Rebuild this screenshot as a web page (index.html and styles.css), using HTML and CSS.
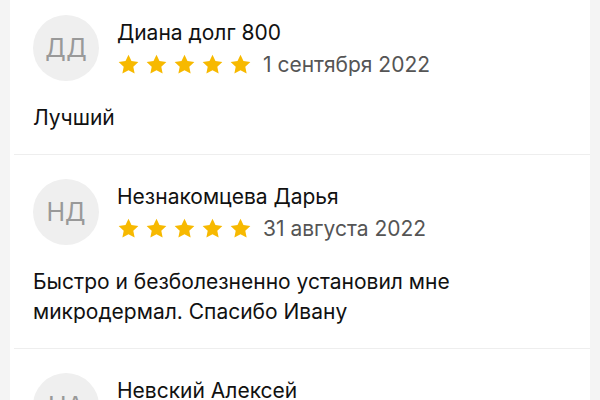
FILE: index.html
```html
<!DOCTYPE html>
<html lang="ru">
<head>
    <meta charset="UTF-8">
    <title>Отзывы</title>
    <link rel="stylesheet" href="styles.css">
</head>
<body>
    <div class="page">
        <div class="reviews">
            <div class="review">
                <div class="head">
                    <div class="avatar">ДД</div>
                    <div class="info">
                        <div class="name">Диана долг 800</div>
                        <div class="meta">
                            <span class="stars">
                                <svg viewBox="0 0 24 24"><path d="M12 1.8l3.1 6.6 7.2.9-5.3 5 1.4 7.1L12 17.9l-6.4 3.5L7 14.3l-5.3-5 7.2-.9z"/></svg>
                                <svg viewBox="0 0 24 24"><path d="M12 1.8l3.1 6.6 7.2.9-5.3 5 1.4 7.1L12 17.9l-6.4 3.5L7 14.3l-5.3-5 7.2-.9z"/></svg>
                                <svg viewBox="0 0 24 24"><path d="M12 1.8l3.1 6.6 7.2.9-5.3 5 1.4 7.1L12 17.9l-6.4 3.5L7 14.3l-5.3-5 7.2-.9z"/></svg>
                                <svg viewBox="0 0 24 24"><path d="M12 1.8l3.1 6.6 7.2.9-5.3 5 1.4 7.1L12 17.9l-6.4 3.5L7 14.3l-5.3-5 7.2-.9z"/></svg>
                                <svg viewBox="0 0 24 24"><path d="M12 1.8l3.1 6.6 7.2.9-5.3 5 1.4 7.1L12 17.9l-6.4 3.5L7 14.3l-5.3-5 7.2-.9z"/></svg>
                            </span>
                            <span class="date">1 сентября 2022</span>
                        </div>
                    </div>
                </div>
                <p class="text">Лучший</p>
            </div>

            <div class="review">
                <div class="head">
                    <div class="avatar">НД</div>
                    <div class="info">
                        <div class="name">Незнакомцева Дарья</div>
                        <div class="meta">
                            <span class="stars">
                                <svg viewBox="0 0 24 24"><path d="M12 1.8l3.1 6.6 7.2.9-5.3 5 1.4 7.1L12 17.9l-6.4 3.5L7 14.3l-5.3-5 7.2-.9z"/></svg>
                                <svg viewBox="0 0 24 24"><path d="M12 1.8l3.1 6.6 7.2.9-5.3 5 1.4 7.1L12 17.9l-6.4 3.5L7 14.3l-5.3-5 7.2-.9z"/></svg>
                                <svg viewBox="0 0 24 24"><path d="M12 1.8l3.1 6.6 7.2.9-5.3 5 1.4 7.1L12 17.9l-6.4 3.5L7 14.3l-5.3-5 7.2-.9z"/></svg>
                                <svg viewBox="0 0 24 24"><path d="M12 1.8l3.1 6.6 7.2.9-5.3 5 1.4 7.1L12 17.9l-6.4 3.5L7 14.3l-5.3-5 7.2-.9z"/></svg>
                                <svg viewBox="0 0 24 24"><path d="M12 1.8l3.1 6.6 7.2.9-5.3 5 1.4 7.1L12 17.9l-6.4 3.5L7 14.3l-5.3-5 7.2-.9z"/></svg>
                            </span>
                            <span class="date">31 августа 2022</span>
                        </div>
                    </div>
                </div>
                <p class="text">Быстро и безболезненно установил мне<br>микродермал. Спасибо Ивану</p>
            </div>

            <div class="review">
                <div class="head">
                    <div class="avatar">НА</div>
                    <div class="info">
                        <div class="name">Невский Алексей</div>
                        <div class="meta">
                            <span class="stars">
                                <svg viewBox="0 0 24 24"><path d="M12 1.8l3.1 6.6 7.2.9-5.3 5 1.4 7.1L12 17.9l-6.4 3.5L7 14.3l-5.3-5 7.2-.9z"/></svg>
                                <svg viewBox="0 0 24 24"><path d="M12 1.8l3.1 6.6 7.2.9-5.3 5 1.4 7.1L12 17.9l-6.4 3.5L7 14.3l-5.3-5 7.2-.9z"/></svg>
                                <svg viewBox="0 0 24 24"><path d="M12 1.8l3.1 6.6 7.2.9-5.3 5 1.4 7.1L12 17.9l-6.4 3.5L7 14.3l-5.3-5 7.2-.9z"/></svg>
                                <svg viewBox="0 0 24 24"><path d="M12 1.8l3.1 6.6 7.2.9-5.3 5 1.4 7.1L12 17.9l-6.4 3.5L7 14.3l-5.3-5 7.2-.9z"/></svg>
                                <svg viewBox="0 0 24 24"><path d="M12 1.8l3.1 6.6 7.2.9-5.3 5 1.4 7.1L12 17.9l-6.4 3.5L7 14.3l-5.3-5 7.2-.9z"/></svg>
                            </span>
                            <span class="date">30 августа 2022</span>
                        </div>
                    </div>
                </div>
            </div>
        </div>
    </div>
</body>
</html>
```

FILE: styles.css
```css
* {
    margin: 0;
    padding: 0;
}
html, body {
    height: 100%;
    overflow: hidden;
}
body {
    background-color: #f4f4f4;
    font-family: Inter, Roboto, "Noto Sans", sans-serif;
    color: #111;
}
.page {
    padding: 0 10px;
}
.reviews {
    background-color: #fff;
    margin-top: -9px; /*страница немного прокручена*/
    padding-left: 4px;
}
.review {
    padding: 24px 0 21px 19px;
    border-bottom: 1px solid #eee;
}
.head {
    display: flex;
    align-items: center;
}
.avatar {
    width: 66px;
    height: 66px;
    border-radius: 50%;
    background-color: #efefef;
    color: #999;
    font-size: 25px;
    display: flex;
    align-items: center;
    justify-content: center;
    flex-shrink: 0;
    margin-right: 18px;
}
.name {
    font-size: 21px;
    line-height: 26px;
}
.meta {
    display: flex;
    align-items: center;
    margin-top: 6px;
}
.stars {
    display: flex;
    gap: 5px;
}
.stars svg {
    width: 23px;
    height: 23px;
    fill: #f7b900;
}
.date {
    margin-left: 11px;
    font-size: 21px;
    color: #555;
}
.text {
    margin-top: 22px;
    font-size: 21px;
    line-height: 30px;
}
```
